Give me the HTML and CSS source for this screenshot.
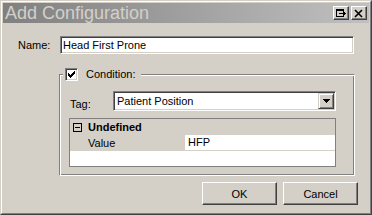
FILE: index.html
```html
<!DOCTYPE html>
<html lang="en">
<head>
    <meta charset="UTF-8">
    <title>Add Configuration</title>
    <link rel="stylesheet" href="styles.css">
</head>
<body>
    <div class="window">
        <div class="frame">
            <div class="titlebar">
                <span class="title">Add Configuration</span>
                <div class="caption-buttons">
                    <span class="cap-btn">
                        <svg width="12" height="10" viewBox="0 0 12 10" shape-rendering="crispEdges">
                            <path d="M1 1h8v2h-8z M1 3h1v6h-1z M1 8h8v1h-8z M8 3h1v2h-1z M8 7h1v1h-1z" fill="#000"/>
                            <path d="M4 5h5v1h-5z M8 4h1v3h-1z M9 4h1v3h-1z M10 5h1v1h-1z" fill="#000"/>
                        </svg>
                    </span>
                    <span class="cap-btn">
                        <svg width="10" height="9" viewBox="0 0 10 9" shape-rendering="crispEdges">
                            <path d="M1 1 L8 8 M8 1 L1 8" stroke="#000" stroke-width="1.6" fill="none" shape-rendering="auto"/>
                        </svg>
                    </span>
                </div>
            </div>

            <div class="content">
                <div class="name-row">
                    <label class="name-label" for="name">Name:</label>
                    <input class="textbox" id="name" type="text" value="Head First Prone">
                </div>

                <fieldset class="group">
                    <legend class="group-title">
                        <span class="check">
                            <svg width="9" height="9" viewBox="0 0 9 9" shape-rendering="crispEdges">
                                <path d="M1 3h1v3h-1z M2 4h1v3h-1z M3 5h1v3h-1z M4 4h1v3h-1z M5 3h1v3h-1z M6 2h1v3h-1z M7 1h1v3h-1z" fill="#000"/>
                            </svg>
                        </span>
                        <span>Condition:</span>
                    </legend>

                    <div class="tag-row">
                        <span class="tag-label">Tag:</span>
                        <div class="combo">
                            <span class="combo-text">Patient Position</span>
                            <span class="combo-btn">
                                <svg width="7" height="4" viewBox="0 0 7 4" shape-rendering="crispEdges">
                                    <path d="M0 0h7v1h-1v1h-1v1h-1v1h-1v-1h-1v-1h-1v-1h-1z" fill="#000"/>
                                </svg>
                            </span>
                        </div>
                    </div>

                    <div class="grid">
                        <div class="cat-row">
                            <svg class="expander" width="9" height="9" viewBox="0 0 9 9" shape-rendering="crispEdges">
                                <rect x="0.5" y="0.5" width="8" height="8" fill="none" stroke="#000"/>
                                <path d="M2 4h5v1h-5z" fill="#000"/>
                            </svg>
                            <span>Undefined</span>
                        </div>
                        <div class="prop-row">
                            <span class="prop-name">Value</span>
                            <span class="prop-value">HFP</span>
                        </div>
                    </div>
                </fieldset>

                <div class="actions">
                    <button class="btn">OK</button>
                    <button class="btn">Cancel</button>
                </div>
            </div>
        </div>
    </div>
</body>
</html>
```

FILE: styles.css
```css
:root {
    --face: #d4d0c8;
    --shadow: #808080;
    --dark: #404040;
    --light: #ffffff;
}

body {
    margin: 0;
    background: var(--face);
    font-family: "Liberation Sans", Arial, sans-serif;
    font-size: 11px;
    color: #000;
}

.window {
    width: 372px;
    height: 215px;
    box-sizing: border-box;
    border: 1px solid;
    border-color: var(--face) var(--dark) var(--dark) var(--face);
    background: var(--face);
}

.frame {
    height: 100%;
    box-sizing: border-box;
    border: 1px solid;
    border-color: var(--light) var(--shadow) var(--shadow) var(--light);
    padding: 1px;
    display: flex;
    flex-direction: column;
}

/* caption */
.titlebar {
    height: 20px;
    flex: none;
    display: flex;
    align-items: center;
    padding: 0 2px;
    background: linear-gradient(to right, #808080, #c0c0c0);
}

.title {
    flex: 1;
    font-size: 18px;
    color: var(--face);
    line-height: 20px;
}

.caption-buttons {
    display: flex;
    gap: 2px;
}

.cap-btn {
    width: 16px;
    height: 14px;
    box-sizing: border-box;
    display: flex;
    align-items: center;
    justify-content: center;
    background: var(--face);
    border: 1px solid;
    border-color: var(--light) var(--dark) var(--dark) var(--light);
    box-shadow: inset -1px -1px var(--shadow);
}

/* body */
.content {
    flex: 1;
    padding: 13px 11px 0 15px;
}

.name-row {
    display: flex;
    align-items: center;
    height: 18px;
}

.name-label {
    width: 42px;
}

.textbox {
    width: 294px;
    height: 18px;
    box-sizing: border-box;
    margin: 0;
    padding: 0 2px;
    font: inherit;
    border: 1px solid;
    border-color: var(--shadow) var(--light) var(--light) var(--shadow);
    box-shadow: inset 1px 1px var(--dark), inset -1px -1px var(--face);
    background: #fff;
    outline: none;
}

.group {
    width: 296px;
    box-sizing: border-box;
    margin: 13px 0 0 41px;
    padding: 10px 18px 8px 9px;
    border: 1px solid;
    border-color: var(--shadow) var(--light) var(--light) var(--shadow);
    box-shadow: inset 1px 1px var(--light), inset -1px -1px var(--shadow);
    min-inline-size: 0;
}

.group-title {
    display: flex;
    align-items: center;
    gap: 8px;
    height: 14px;
    margin-left: -6px;
    padding: 0 5px 0 2px;
    background: var(--face);
}

.check {
    width: 13px;
    height: 13px;
    box-sizing: border-box;
    display: flex;
    align-items: center;
    justify-content: center;
    background: #fff;
    border: 1px solid;
    border-color: var(--shadow) var(--light) var(--light) var(--shadow);
    box-shadow: inset 1px 1px var(--dark), inset -1px -1px var(--face);
}

.tag-row {
    display: flex;
    align-items: flex-end;
}

.tag-label {
    width: 43px;
    padding-left: 1px;
    line-height: 13px;
}

.combo {
    width: 223px;
    height: 20px;
    box-sizing: border-box;
    display: flex;
    align-items: center;
    background: #fff;
    border: 1px solid;
    border-color: var(--shadow) var(--light) var(--light) var(--shadow);
    box-shadow: inset 1px 1px var(--dark), inset -1px -1px var(--face);
    padding: 1px;
}

.combo-text {
    flex: 1;
    padding-left: 2px;
}

.combo-btn {
    width: 16px;
    height: 16px;
    box-sizing: border-box;
    display: flex;
    align-items: center;
    justify-content: center;
    background: var(--face);
    border: 1px solid;
    border-color: var(--face) var(--dark) var(--dark) var(--face);
    box-shadow: inset 1px 1px var(--light), inset -1px -1px var(--shadow);
}

/* property grid */
.grid {
    width: 267px;
    height: 49px;
    box-sizing: border-box;
    margin-top: 7px;
    border: 1px solid var(--shadow);
    background: #fff;
}

.cat-row {
    height: 16px;
    display: flex;
    align-items: center;
    gap: 6px;
    padding-left: 3px;
    background: var(--face);
    font-weight: bold;
}

.prop-row {
    display: flex;
    height: 16px;
}

.prop-name {
    width: 115px;
    box-sizing: border-box;
    padding-left: 18px;
    line-height: 16px;
    background: var(--face);
}

.prop-value {
    flex: 1;
    padding-left: 3px;
    line-height: 15px;
    border-bottom: 1px solid var(--face);
}

/* dialog buttons */
.actions {
    display: flex;
    justify-content: flex-end;
    gap: 6px;
    margin-top: 6px;
}

.btn {
    width: 75px;
    height: 23px;
    box-sizing: border-box;
    margin: 0;
    padding: 0;
    font: inherit;
    color: #000;
    background: var(--face);
    border: 1px solid;
    border-color: var(--light) var(--dark) var(--dark) var(--light);
    box-shadow: inset -1px -1px var(--shadow);
}
```
